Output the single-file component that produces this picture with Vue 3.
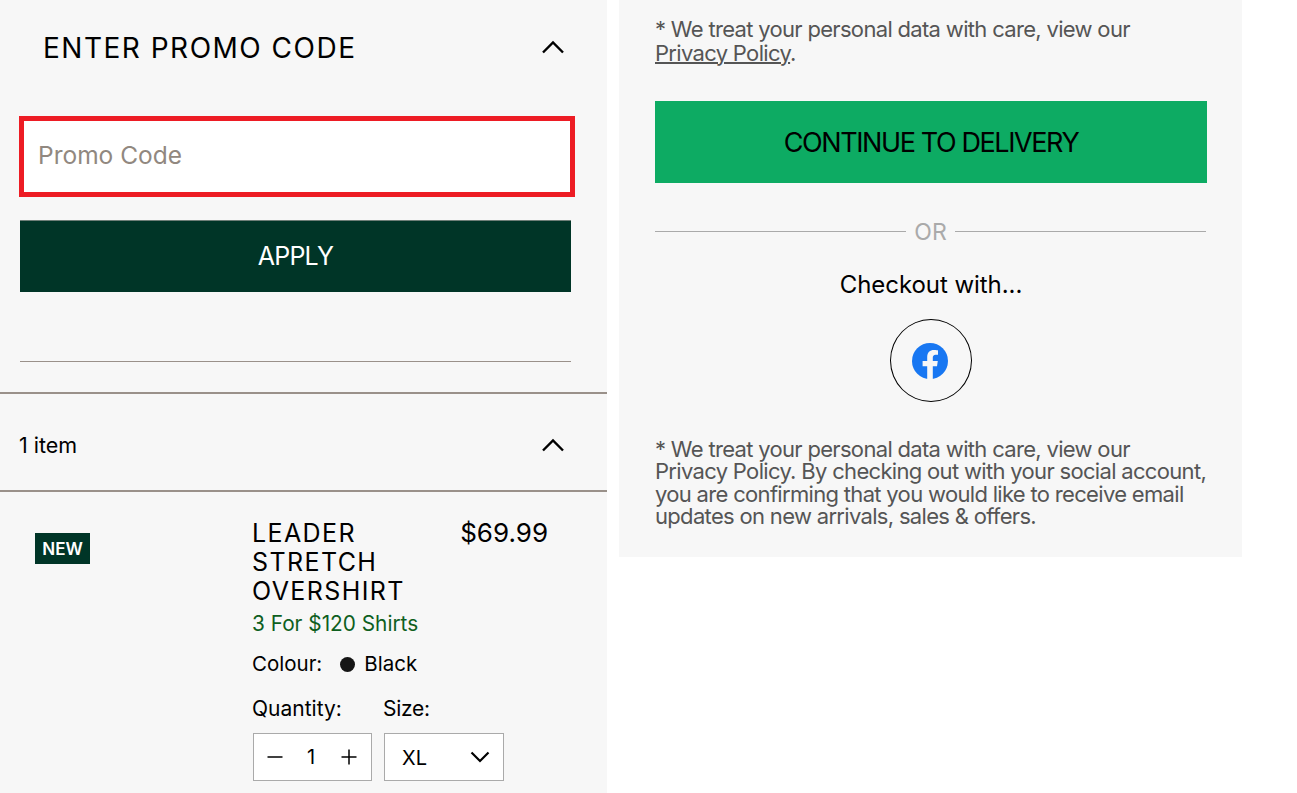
<template>
  <div class="page">
    <section class="left">
      <header class="promo-head">
        <h2>ENTER PROMO CODE</h2>
        <svg class="chev up" viewBox="0 0 24 14" width="24" height="14"><path d="M2 12.500 12 2.500l10 10" fill="none" stroke="#000" stroke-width="2.400"/></svg>
      </header>
      <div class="promo-input"><input placeholder="Promo Code" /></div>
      <button class="apply">APPLY</button>
      <div class="thin"></div>
      <div class="items-head">
        <span>1 item</span>
        <svg class="chev" viewBox="0 0 24 14" width="24" height="14"><path d="M2 12.500 12 2.500l10 10" fill="none" stroke="#000" stroke-width="2.400"/></svg>
      </div>
      <div class="item">
        <div class="media"><span class="badge">NEW</span></div>
        <div class="info">
          <div class="title-row">
            <h3>LEADER STRETCH OVERSHIRT</h3>
            <span class="price">$69.99</span>
          </div>
          <div class="promo-note">3 For $120 Shirts</div>
          <div class="colour"><span>Colour:</span><i class="dot"></i><span>Black</span></div>
          <div class="selectors">
            <div class="qty-col">
              <label>Quantity:</label>
              <div class="qty">
                <svg viewBox="0 0 16 16" width="16" height="16"><path d="M0.500 8h15" stroke="#000" stroke-width="1.500"/></svg>
                <span>1</span>
                <svg viewBox="0 0 16 16" width="16" height="16"><path d="M0.500 8h15M8 .5v15" stroke="#000" stroke-width="1.500"/></svg>
              </div>
            </div>
            <div class="size-col">
              <label>Size:</label>
              <div class="size">
                <span>XL</span>
                <svg viewBox="0 0 20 12" width="20" height="12"><path d="M1.500 1.500 10 10l8.500-8.500" fill="none" stroke="#000" stroke-width="2.200"/></svg>
              </div>
            </div>
          </div>
        </div>
      </div>
    </section>
    <aside class="right">
      <p class="note first">* We treat your personal data with care, view our <a>Privacy Policy</a>.</p>
      <button class="continue">CONTINUE TO DELIVERY</button>
      <div class="or"><span>OR</span></div>
      <div class="checkout">Checkout with...</div>
      <div class="fb">
        <svg viewBox="0 0 36 36" width="36" height="36">
          <circle cx="18" cy="18" r="18" fill="#1877f2"/>
          <path d="M25 23.200 25.800 18H20.800v-3.400c0-1.400.7-2.800 2.900-2.800h2.300V7.400s-2-.4-4-.4c-4.100 0-6.800 2.500-6.800 7V18h-4.600v5.200H15.200V36h5.600V23.200z" fill="#f7f7f7"/>
        </svg>
      </div>
      <p class="note last">* We treat your personal data with care, view our Privacy Policy. By checking out with your social account, you are confirming that you would like to receive email updates on new arrivals, sales &amp; offers.</p>
    </aside>
  </div>
</template>

<script setup>
</script>

<style>
html, body { margin: 0; background: #fff; overflow: hidden; }
</style>

<style scoped>
.page {
  display: flex;
  gap: 12px;
  width: 1297px;
  height: 793px;
  overflow: hidden;
  font-family: Inter, "Liberation Sans", sans-serif;
  color: #000;
  align-items: flex-start;
}
.left {
  width: 607px;
  height: 793px;
  flex: none;
  background: #f7f7f7;
}
.promo-head {
  height: 96px;
  display: flex;
  align-items: center;
  justify-content: space-between;
  padding: 0 42px 0 43px;
  box-sizing: border-box;
}
.promo-head h2 {
  margin: 0;
  font-size: 28px;
  font-weight: 400;
  letter-spacing: 1.500px;
}
.chev { display: block; }
.chev.up { margin-top: -2px; }
.promo-input {
  margin: 20px 0 0 19px;
  width: 556px;
  height: 81px;
  box-sizing: border-box;
  border: 5px solid #ed1c24;
  background: #fff;
}
.promo-input input {
  width: 100%;
  height: 100%;
  box-sizing: border-box;
  border: 0;
  outline: 0;
  padding: 0 14px 4px;
  background: transparent;
  font: 400 24.500px Inter, sans-serif;
}
.promo-input input::placeholder { color: #918880; opacity: 1; }
.apply {
  display: block;
  margin: 23px 0 0 20px;
  width: 551px;
  height: 72px;
  border: 0;
  border-top: 1px solid #6f7f78;
  background: #003527;
  color: #fff;
  font: 400 25px Inter, sans-serif;
  letter-spacing: -0.800px;
  padding: 0 0 2px;
}
.thin {
  margin: 69px 0 0 20px;
  width: 551px;
  height: 1px;
  background: #9a918a;
}
.items-head {
  margin-top: 30px;
  height: 100px;
  box-sizing: border-box;
  border-top: 2px solid #9a918a;
  border-bottom: 2px solid #9a918a;
  display: flex;
  align-items: center;
  justify-content: space-between;
  padding: 5px 42px 0 19px;
  font-size: 21.500px;
}
.item {
  display: flex;
  padding-top: 27px;
}
.media { width: 252px; flex: none; padding: 14px 0 0 35px; box-sizing: border-box; }
.badge {
  display: inline-block;
  width: 55px;
  height: 31px;
  line-height: 32px;
  text-align: center;
  background: #003527;
  color: #fff;
  font-size: 17px;
  font-weight: 600;
}
.info { width: 300px; }
.title-row { display: flex; justify-content: space-between; }
.title-row h3 {
  margin: 0;
  width: 170px;
  font-size: 25px;
  line-height: 29px;
  font-weight: 400;
  letter-spacing: 1.400px;
}
.price { font-size: 26px; line-height: 27px; margin-right: 4px; }
.promo-note { color: #0e5f1e; font-size: 20.800px; line-height: 24px; margin-top: 6px; }
.colour { display: flex; align-items: center; font-size: 20.500px; line-height: 24px; margin-top: 16px; }
.dot { width: 15px; height: 15px; border-radius: 50%; background: #151515; margin: 0 9px 0 18px; }
.selectors { display: flex; gap: 11px; margin-top: 21px; }
label { display: block; font-size: 21px; line-height: 24px; margin-bottom: 12px; }
.size-col label { letter-spacing: -0.300px; }
.qty, .size {
  height: 48px;
  box-sizing: border-box;
  border: 1px solid #aaa;
  background: #fff;
  display: flex;
  align-items: center;
  justify-content: space-between;
  font-size: 20px;
}
.qty { width: 119px; margin-left: 1px; padding: 0 14px 0 13px; }
.qty span { margin-left: -2px; }
.size { width: 120px; margin-left: 1px; padding: 0 13px 0 17px; }
.size span { position: relative; top: 1px; }
.right {
  width: 623px;
  height: 557px;
  flex: none;
  background: #f7f7f7;
  padding: 0 35px 0 36px;
  box-sizing: border-box;
}
.note {
  margin: 0;
  color: #555;
  font-size: 22px;
  line-height: 22.400px;
  letter-spacing: -0.680px;
}
.note a { text-decoration: underline; text-decoration-thickness: 1.500px; }
.note.first { padding-top: 17px; line-height: 24px; }
.continue {
  display: block;
  margin-top: 36px;
  width: 552px;
  height: 82px;
  border: 0;
  padding: 0;
  background: #0dab63;
  color: #000;
  font: 400 27px Inter, sans-serif;
  letter-spacing: -1.400px;
}
.or {
  display: flex;
  align-items: center;
  gap: 8px;
  margin-top: 35px;
  width: 551px;
  color: #aaa;
  font-size: 23px;
  line-height: 28px;
}
.or::before, .or::after { content: ""; flex: 1; height: 1px; background: #aaa; margin-top: -1px; }
.checkout { text-align: center; font-size: 24px; line-height: 28px; margin-top: 25px; letter-spacing: -0.050px; }
.fb {
  width: 82px;
  height: 83px;
  box-sizing: border-box;
  border: 1px solid #000;
  border-radius: 50%;
  margin: 20px auto 0;
  display: flex;
  align-items: center;
  justify-content: center;
}
.fb svg { display: block; margin: 0 2px 0 0; }
.note.last { margin-top: 36px; }
</style>
